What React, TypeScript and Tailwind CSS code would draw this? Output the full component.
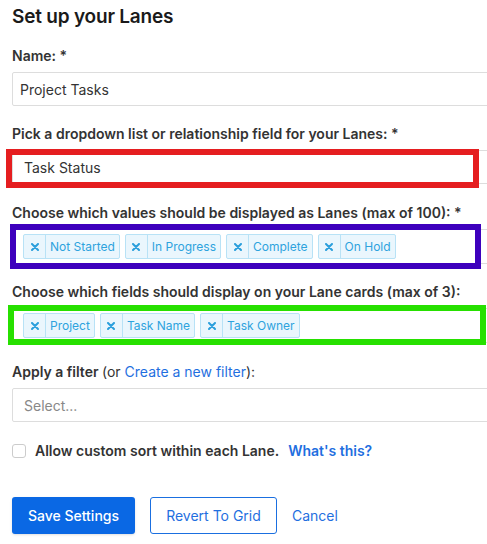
import React from 'react';

const laneValues = ['Not Started', 'In Progress', 'Complete', 'On Hold'];
const cardFields = ['Project', 'Task Name', 'Task Owner'];

function Chip({ label }: { label: string }) {
  return (
    <div className="flex h-[25px] items-stretch rounded-[2px] border border-[#b8e2f6] bg-[#eaf6fd] text-[12px] text-[#2ea3dd]">
      <span className="flex w-[22px] items-center justify-center border-r border-[#b8e2f6]">
        <svg width="8" height="8" viewBox="0 0 8 8" fill="none">
          <path d="M1 1L7 7M7 1L1 7" stroke="#2b9fdc" strokeWidth="2" strokeLinecap="round" />
        </svg>
      </span>
      <span className="flex items-center px-[4px]">{label}</span>
    </div>
  );
}

function Label({ children }: { children: React.ReactNode }) {
  return <div className="mb-[6px] text-[14px] font-semibold leading-[20px] text-[#333]">{children}</div>;
}

export default function App() {
  return (
    <div className="h-[544px] w-[487px] overflow-hidden bg-white font-['Inter',sans-serif]">
      <div className="w-[540px] pl-3">
        <h1 className="pt-[3px] text-[19px] font-semibold leading-[28px] tracking-[-0.2px] text-[#1a1a1a]">Set up your Lanes</h1>

        <div className="mt-[15px]">
          <Label>Name: *</Label>
          <div className="flex h-[34px] items-center rounded-[2px] border border-[#ddd] px-[7px] text-[14px] text-[#333]">
            Project Tasks
          </div>
        </div>

        <div className="mt-[18px]">
          <Label>Pick a dropdown list or relationship field for your Lanes: *</Label>
          <div className="relative">
            <div className="flex h-[34px] items-center rounded-[2px] border border-[#ddd] px-[11px] text-[14px] text-[#333]">
              Task Status
            </div>
            <div className="pointer-events-none absolute left-[-6px] top-[-1px] h-[39px] w-[473px] border-[6px] border-[#e51e20]" />
          </div>
        </div>

        <div className="mt-[19px]">
          <Label>Choose which values should be displayed as Lanes (max of 100): *</Label>
          <div className="relative">
            <div className="flex h-[35px] items-center gap-[5px] rounded-[2px] border border-[#ddd] pl-[10px]">
              {laneValues.map((v) => (
                <Chip key={v} label={v} />
              ))}
            </div>
            <div className="pointer-events-none absolute left-[-2px] top-[-5px] h-[45px] w-[471px] border-[6px] border-[#3d00bd]" />
          </div>
        </div>

        <div className="mt-[18px]">
          <Label>Choose which fields should display on your Lane cards (max of 3):</Label>
          <div className="relative">
            <div className="flex h-[35px] items-center gap-[5px] rounded-[2px] border border-[#ddd] pl-[10px]">
              {cardFields.map((v) => (
                <Chip key={v} label={v} />
              ))}
            </div>
            <div className="pointer-events-none absolute left-[-4px] top-[-3px] h-[40px] w-[478px] border-[6px] border-[#27e000]" />
          </div>
        </div>

        <div className="mt-[19px]">
          <Label>
            Apply a filter <span className="font-normal">(or </span>
            <span className="font-normal text-[#1f6fe0]">Create a new filter</span>
            <span className="font-normal">):</span>
          </Label>
          <div className="flex h-[34px] items-center rounded-[2px] border border-[#ddd] px-[11px] text-[14px] text-[#888]">
            Select...
          </div>
        </div>

        <div className="mt-[18px] flex items-center">
          <div className="h-[14px] w-[14px] rounded-[3px] border border-[#ccc] bg-white" />
          <span className="ml-[9px] text-[14px] font-semibold text-[#333]">Allow custom sort within each Lane.</span>
          <span className="ml-[9px] text-[14px] font-semibold text-[#1f6fe0]">What's this?</span>
        </div>

        <div className="mt-[36px] flex items-center">
          <button className="h-[37px] w-[123px] rounded-[3px] bg-[#0a68e4] text-[14px] font-medium text-white shadow-sm">
            Save Settings
          </button>
          <button className="ml-[15px] h-[37px] w-[127px] rounded-[3px] border border-[#1a6fe0] bg-white text-[14px] text-[#1f6fe0]">
            Revert To Grid
          </button>
          <span className="ml-[15px] text-[14px] text-[#1f6fe0]">Cancel</span>
        </div>
      </div>
    </div>
  );
}
